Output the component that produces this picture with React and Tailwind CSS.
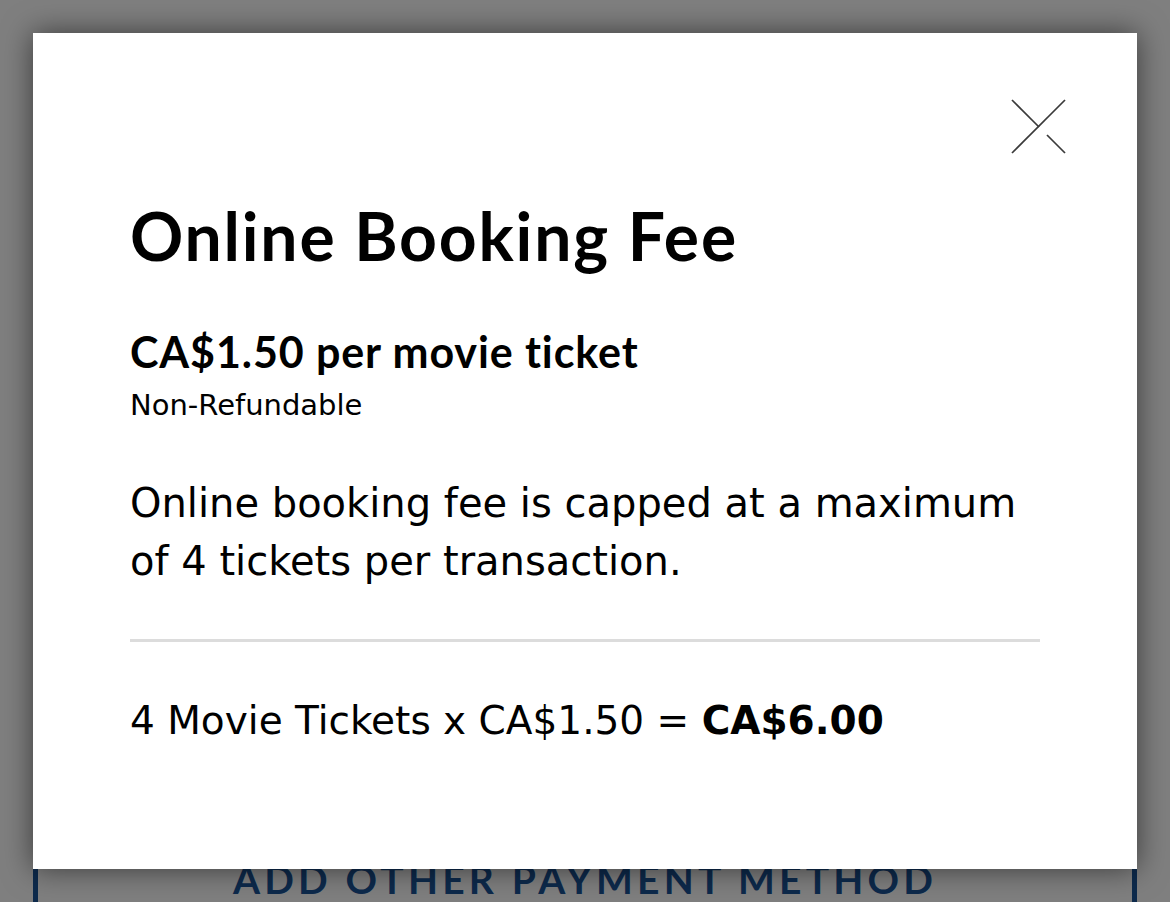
import React from 'react';

function CloseIcon() {
  return (
    <svg width="56" height="56" viewBox="0 0 56 56" fill="none" stroke="#3a3a3a" strokeWidth="1.7">
      <line x1="1" y1="1" x2="28" y2="28" />
      <line x1="36" y1="36" x2="54" y2="54" />
      <line x1="54" y1="1" x2="1" y2="54" />
    </svg>
  );
}

const lato = { fontFamily: 'Lato, "Noto Sans", sans-serif' };
const dejavu = { fontFamily: '"DejaVu Sans", "Noto Sans", sans-serif' };

export default function App() {
  return (
    <div className="relative h-[902px] w-full overflow-hidden bg-white" style={lato}>
      {/* page behind the overlay */}
      <div className="pt-[820px] px-[33px]">
        <div className="h-[200px] border-x-[5px] border-[#1a5499] flex justify-center pt-[40px]">
          <span className="text-[39px] font-bold tracking-[4.2px] text-[#1a5499] leading-none">ADD OTHER PAYMENT METHOD</span>
        </div>
      </div>

      {/* overlay */}
      <div className="absolute inset-0 bg-black/50" />

      {/* modal */}
      <div className="absolute left-[33px] top-[33px] w-[1104px] h-[836px] bg-white shadow-[0_0_28px_rgba(0,0,0,0.55)] px-[97px] pt-[170px] text-black">
        <button className="absolute right-[70px] top-[66px]">
          <CloseIcon />
        </button>

        <h1 className="text-[66px] font-bold leading-none tracking-[1.8px]">Online Booking Fee</h1>

        <div className="mt-[61px] text-[43px] font-bold leading-none tracking-[0.9px]">CA$1.50 per movie ticket</div>
        <div className="mt-[18px] text-[29px] leading-none" style={dejavu}>Non-Refundable</div>

        <p className="mt-[54px] text-[40px] leading-[58px]" style={dejavu}>
          Online booking fee is capped at a maximum<br />of 4 tickets per transaction.
        </p>

        <div className="mt-[49px] h-[3px] bg-[#dcdcdc]" />

        <div className="mt-[59px] text-[39px] leading-none" style={dejavu}>
          4 Movie Tickets x CA$1.50 = <span className="font-bold">CA$6.00</span>
        </div>
      </div>
    </div>
  );
}
